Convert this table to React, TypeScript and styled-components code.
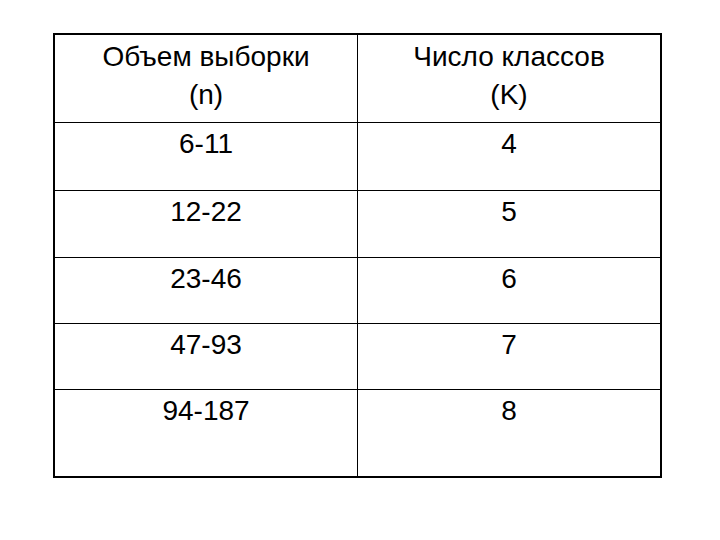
import styled, { createGlobalStyle } from 'styled-components'

interface IRow {
  n: string[]
  k: string[]
  height: number
}

const rows: IRow[] = [
  { n: ['Объем выборки', '(n)'], k: ['Число классов', '(K)'], height: 88 },
  { n: ['6-11'], k: ['4'], height: 68 },
  { n: ['12-22'], k: ['5'], height: 67 },
  { n: ['23-46'], k: ['6'], height: 66 },
  { n: ['47-93'], k: ['7'], height: 66 },
  { n: ['94-187'], k: ['8'], height: 86 }
]

export default function App() {
  return (
    <>
      <GlobalStyle />
      <Page>
        <Table $rows={rows.map((r) => r.height)}>
          {rows.map((row, i) => {
            const last = i === rows.length - 1
            const head = i === 0
            return [
              <Cell key={'n' + i} $last={last} $head={head} $left>
                {row.n.map((line) => (
                  <Line key={line}>{line}</Line>
                ))}
              </Cell>,
              <Cell key={'k' + i} $last={last} $head={head}>
                {row.k.map((line) => (
                  <Line key={line}>{line}</Line>
                ))}
              </Cell>
            ]
          })}
        </Table>
      </Page>
    </>
  )
}

const GlobalStyle = createGlobalStyle`
  html, body {
    margin: 0;
    padding: 0;
    background: #ffffff;
  }
  body {
    font-family: "Liberation Sans", Arial, sans-serif;
    color: #000000;
  }
`

const Page = styled.div`
  width: 720px;
  height: 540px;
  padding: 33px 0 0 53px;
  box-sizing: border-box;
`

const Table = styled.div<{ $rows: number[] }>`
  display: grid;
  grid-template-columns: 303px 302px;
  grid-template-rows: ${(p) => p.$rows.map((h) => h + 'px').join(' ')};
  width: 609px;
  box-sizing: border-box;
  border: 2px solid #000;
`

const Cell = styled.div<{ $last: boolean; $head: boolean; $left?: boolean }>`
  display: flex;
  flex-direction: column;
  align-items: center;
  box-sizing: border-box;
  padding-top: ${(p) => (p.$head ? '3px' : '2px')};
  border-bottom: ${(p) => (p.$last ? 'none' : '1px solid #000')};
  border-right: ${(p) => (p.$left ? '1px solid #000' : 'none')};
`

const Line = styled.span`
  font-size: 28px;
  line-height: 38px;
  white-space: nowrap;
`
